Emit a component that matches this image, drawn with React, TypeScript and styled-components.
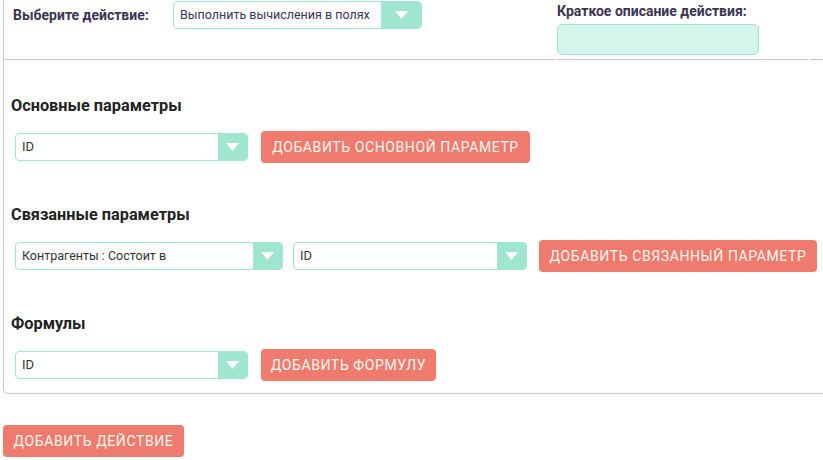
import styled, { createGlobalStyle } from 'styled-components'

const GlobalStyle = createGlobalStyle`
  body {
    margin: 0;
    background: #ffffff;
    font-family: Roboto, "Liberation Sans", Arial, sans-serif;
  }
`

const Page = styled.div`
  width: 823px;
  height: 460px;
  overflow: hidden;
`

const Panel = styled.div`
  margin-left: 3px;
  width: 820px;
  border-left: 1px solid #c3c8cc;
  border-bottom: 1px solid #c3c8cc;
  border-bottom-left-radius: 5px;
  padding-bottom: 12px;
`

const TopRow = styled.div`
  display: grid;
  grid-template-columns: 551px 251px 1fr;
  column-gap: 2px;
  height: 60px;
`

const TopCell = styled.div<{ $stack?: boolean }>`
  border-bottom: 1px solid #c3c8cc;
  display: flex;
  flex-direction: ${({ $stack }) => ($stack ? 'column' : 'row')};
  align-items: flex-start;
  padding: ${({ $stack }) => ($stack ? '4px 0 0 0' : '1px 0 0 9px')};
  gap: ${({ $stack }) => ($stack ? '6px' : '0')};
`

const Label = styled.div<{ $width?: number }>`
  font-size: 14px;
  font-weight: 700;
  color: #3b3453;
  line-height: 28px;
  width: ${({ $width }) => ($width ? `${$width}px` : 'auto')};
  white-space: nowrap;
`

const StackLabel = styled(Label)`
  line-height: 14px;
`

const DescInput = styled.div`
  width: 200px;
  height: 29px;
  background: #d3f5ec;
  border: 1px solid #9fe6d1;
  border-radius: 5px;
`

const Select = styled.div<{ $width: number; $gap?: number }>`
  box-sizing: border-box;
  width: ${({ $width }) => $width}px;
  height: 28px;
  margin-left: ${({ $gap }) => $gap ?? 0}px;
  display: flex;
  border: 1px solid #9fe6d1;
  border-radius: 4px;
  overflow: hidden;
  background: #ffffff;
  flex-shrink: 0;
`

const SelectText = styled.div<{ $dark?: boolean; $size?: number }>`
  flex: 1;
  padding-left: 6px;
  font-size: ${({ $size }) => $size ?? 13}px;
  color: ${({ $dark }) => ($dark ? '#3b3453' : '#333333')};
  line-height: 26px;
  white-space: nowrap;
  overflow: hidden;
`

const ArrowBox = styled.div<{ $w: number }>`
  width: ${({ $w }) => $w}px;
  background: #9fe6d1;
  display: flex;
  align-items: center;
  justify-content: center;
`

const Section = styled.div<{ $first?: boolean }>`
  padding-top: ${({ $first }) => ($first ? '37px' : '43px')};
`

const Heading = styled.h3`
  margin: 0 0 16px 7px;
  font-size: 16.3px;
  font-weight: 700;
  color: #222222;
  line-height: 18px;
`

const Row = styled.div`
  display: flex;
  align-items: center;
  padding-left: 11px;
  height: 32px;
`

const Button = styled.button<{ $width: number; $gap?: number }>`
  box-sizing: border-box;
  width: ${({ $width }) => $width}px;
  height: 32px;
  margin-left: ${({ $gap }) => $gap ?? 13}px;
  border: none;
  border-radius: 4px;
  background: #ef7a6e;
  color: #fff8ee;
  font-family: Roboto, "Liberation Sans", Arial, sans-serif;
  font-size: 14px;
  letter-spacing: 0.6px;
  text-transform: uppercase;
  white-space: nowrap;
  padding: 0;
  cursor: pointer;
`

const BottomButton = styled(Button)`
  display: block;
  margin: 31px 0 0 3px;
`

function Arrow() {
  return (
    <svg width="13" height="8" viewBox="0 0 13 8">
      <polygon points="0,0 13,0 6.5,8" fill="#ffffff" />
    </svg>
  )
}

interface IDropdown {
  width: number
  arrow?: number
  text: string
  dark?: boolean
  size?: number
  gap?: number
}

function Dropdown({ width, arrow = 29, text, dark, size, gap }: IDropdown) {
  return (
    <Select $width={width} $gap={gap}>
      <SelectText $dark={dark} $size={size}>{text}</SelectText>
      <ArrowBox $w={arrow}>
        <Arrow />
      </ArrowBox>
    </Select>
  )
}

export default function App() {
  return (
    <Page>
      <GlobalStyle />
      <Panel>
        <TopRow>
          <TopCell>
            <Label $width={160}>Выберите действие:</Label>
            <Dropdown width={249} arrow={40} text="Выполнить вычисления в полях" dark size={12.5} />
          </TopCell>
          <TopCell $stack>
            <StackLabel>Краткое описание действия:</StackLabel>
            <DescInput />
          </TopCell>
          <TopCell />
        </TopRow>

        <Section $first>
          <Heading>Основные параметры</Heading>
          <Row>
            <Dropdown width={233} text="ID" />
            <Button $width={269}>Добавить основной параметр</Button>
          </Row>
        </Section>

        <Section>
          <Heading>Связанные параметры</Heading>
          <Row>
            <Dropdown width={268} text="Контрагенты : Состоит в" size={12.5} />
            <Dropdown width={234} text="ID" gap={10} />
            <Button $width={278} $gap={12}>Добавить связанный параметр</Button>
          </Row>
        </Section>

        <Section>
          <Heading>Формулы</Heading>
          <Row>
            <Dropdown width={233} text="ID" />
            <Button $width={175}>Добавить формулу</Button>
          </Row>
        </Section>
      </Panel>
      <BottomButton $width={181}>Добавить действие</BottomButton>
    </Page>
  )
}
